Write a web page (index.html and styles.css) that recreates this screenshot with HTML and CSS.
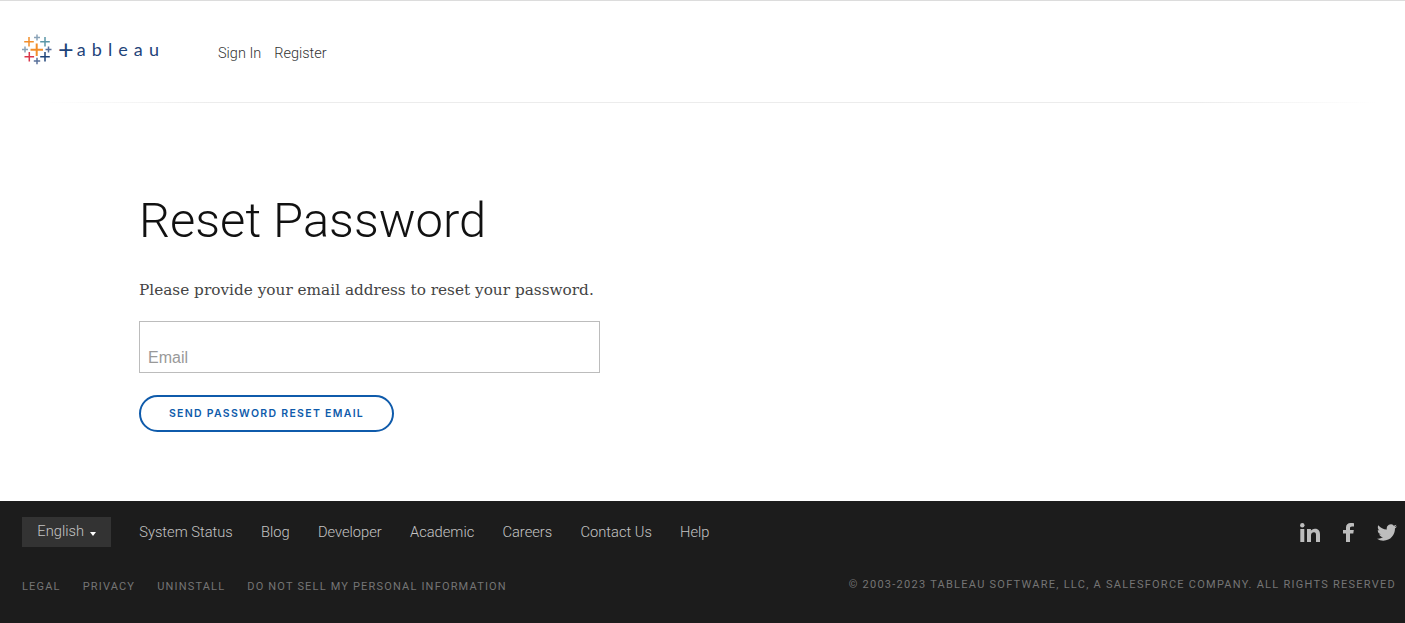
FILE: index.html
```html
<!DOCTYPE html>
<html lang="en">
<head>
  <title>Reset Password</title>
  <meta charset="UTF-8">
  <link rel="stylesheet" href="styles.css">
</head>
<body>
  <header class="site-header">
    <a class="logo" href="#">
      <svg class="logo-mark" width="30" height="30" viewBox="0 0 30 30" fill="none" stroke-width="1.5">
        <path stroke="#8aa3b8" d="M15 -0.5v6M12 2.5h6"/>
        <path stroke="#f28e2b" d="M7 2v9.500M2.200 6.700h9.600"/>
        <path stroke="#5b97a8" d="M23 2v9.500M18.200 6.700h9.600"/>
        <path stroke="#f28e2b" stroke-width="2" d="M14.700 8.500v12.500M8.500 14.800h12.500"/>
        <path stroke="#8aa3b8" d="M3 11.500v6M0 14.500h6"/>
        <path stroke="#59709a" d="M26.500 11.500v6M23.500 14.500h6"/>
        <path stroke="#d9374b" d="M7.300 17v9.500M2.500 21.700h9.600"/>
        <path stroke="#1f447a" d="M23 17v9.500M18.200 21.700h9.600"/>
        <path stroke="#59709a" d="M15 22.800v6.400M11.800 26h6.400"/>
      </svg>
      <span class="logo-word"><span class="logo-plus">+</span>ableau</span>
    </a>
    <nav class="header-nav">
      <a href="#">Sign In</a>
      <a href="#">Register</a>
    </nav>
  </header>

  <main class="content">
    <h1>Reset Password</h1>
    <p class="intro">Please provide your email address to reset your password.</p>
    <form class="reset-form">
      <input class="email-input" type="email" placeholder="Email">
      <button class="send-button" type="button">Send password reset email</button>
    </form>
  </main>

  <footer class="site-footer">
    <div class="footer-row">
      <div class="footer-links">
        <button class="lang-button" type="button">English <span class="caret"></span></button>
        <a href="#">System Status</a>
        <a href="#">Blog</a>
        <a href="#">Developer</a>
        <a href="#">Academic</a>
        <a href="#">Careers</a>
        <a href="#">Contact Us</a>
        <a href="#">Help</a>
      </div>
      <div class="social">
        <a href="#" aria-label="LinkedIn">
          <svg width="20" height="19" viewBox="0 0 20 19" fill="#bdbdbd"><circle cx="2.300" cy="2.200" r="2.200"/><rect x="0.300" y="6" width="4" height="13"/><path d="M7 6h3.900v1.800c.6-1.100 2-2.100 4-2.100 3.900 0 5.100 2.500 5.100 5.800V19h-4v-6.700c0-1.700-.4-3-2-3s-3 1.300-3 3V19H7z"/></svg>
        </a>
        <a href="#" aria-label="Facebook">
          <svg width="11" height="19" viewBox="0 0 11 19" fill="#bdbdbd"><path d="M3 19V10.500H0V7h3V4.600C3 1.500 4.900 0 7.600 0 8.900 0 10 .1 11 .2v3.200H9c-1.500 0-2 .7-2 1.900V7h3.800l-.5 3.500H7V19z"/></svg>
        </a>
        <a href="#" aria-label="Twitter">
          <svg width="20" height="17" viewBox="0 2 24 20" fill="#bdbdbd"><path d="M23.953 4.570a10 10 0 01-2.825.775 4.958 4.958 0 002.163-2.723c-.951.555-2.005.959-3.127 1.184a4.920 4.920 0 00-8.384 4.482C7.690 8.095 4.067 6.130 1.640 3.162a4.822 4.822 0 00-.666 2.475c0 1.710.870 3.213 2.188 4.096a4.904 4.904 0 01-2.228-.616v.060a4.923 4.923 0 003.946 4.827 4.996 4.996 0 01-2.212.085 4.936 4.936 0 004.604 3.417 9.867 9.867 0 01-6.102 2.105c-.390 0-.779-.023-1.170-.067a13.995 13.995 0 007.557 2.209c9.053 0 13.998-7.496 13.998-13.985 0-.210 0-.420-.015-.630A9.935 9.935 0 0024 4.590z"/></svg>
        </a>
      </div>
    </div>
    <div class="footer-row footer-legal">
      <div class="legal-links">
        <a href="#">Legal</a>
        <a href="#">Privacy</a>
        <a href="#">Uninstall</a>
        <a href="#">Do not sell my personal information</a>
      </div>
      <div class="copyright">© 2003-2023 Tableau Software, LLC, a Salesforce Company. All Rights Reserved</div>
    </div>
  </footer>
</body>
</html>
```

FILE: styles.css
```css
* {
  box-sizing: border-box;
}
body {
  margin: 0;
  min-height: 623px;
  display: flex;
  flex-direction: column;
  font-family: 'Roboto', sans-serif;
  font-weight: 300;
  background-color: #fff;
  border-top: 1px solid #dcdcdc;
}
a {
  color: inherit;
  text-decoration: none;
}
.site-header {
  height: 102px;
  padding: 34px 0 0 22px;
  display: flex;
  align-items: flex-start;
  background: linear-gradient(to right, transparent 3%, #ececec 15%, #ececec 85%, transparent 98%) bottom / 100% 1px no-repeat;
}
.logo {
  width: 196px;
  display: flex;
  align-items: center;
  gap: 6px;
}
.logo-mark {
  overflow: visible;
}
.logo-word {
  display: flex;
  align-items: center;
  margin-bottom: 2px;
  font-family: 'Lato', sans-serif;
  font-weight: 400;
  font-size: 18px;
  line-height: 20px;
  letter-spacing: 6.100px;
  color: #1f447a;
}
.logo-plus {
  font-size: 27px;
  letter-spacing: 3px;
}
.header-nav {
  display: flex;
  gap: 13px;
  padding-top: 10px;
  font-size: 14.500px;
  color: #333;
}
.content {
  flex: 1;
  padding: 87px 0 0 139px;
}
h1 {
  margin: 0;
  font-size: 48.900px;
  line-height: 62px;
  font-weight: 300;
  color: #111;
}
.intro {
  margin: 25px 0 0;
  font-family: 'DejaVu Serif', serif;
  font-weight: 400;
  font-size: 15.300px;
  line-height: 26px;
  color: #444;
}
.reset-form {
  margin-top: 18px;
  display: flex;
  flex-direction: column;
  align-items: flex-start;
  gap: 22px;
}
.email-input {
  width: 461px;
  height: 52px;
  padding: 22px 8px 0;
  border: 1px solid #bcbcbc;
  font-family: 'Liberation Sans', sans-serif;
  font-size: 16px;
}
.email-input::placeholder {
  color: #999;
}
.send-button {
  width: 255px;
  height: 37px;
  border: 2px solid #0f5bab;
  border-radius: 19px;
  background: #fff;
  color: #0f5bab;
  font-family: 'Inter', sans-serif;
  font-size: 10.500px;
  font-weight: 600;
  letter-spacing: 1.300px;
  text-transform: uppercase;
}
.site-footer {
  height: 122px;
  padding: 16px 9px 0 22px;
  background-color: #1c1c1c;
  color: #c4c4c4;
}
.footer-row {
  display: flex;
  justify-content: space-between;
  align-items: center;
}
.footer-links {
  display: flex;
  align-items: center;
  gap: 28.200px;
  font-size: 14.700px;
}
.lang-button {
  width: 89px;
  height: 30px;
  padding: 0 0 2px;
  border: none;
  background-color: #333;
  color: #c4c4c4;
  font-family: inherit;
  font-weight: 300;
  font-size: 14.700px;
}
.caret {
  display: inline-block;
  margin-left: 2px;
  border-left: 3px solid transparent;
  border-right: 3px solid transparent;
  border-top: 4px solid #fff;
}
.social {
  display: flex;
  align-items: center;
  gap: 23px;
  margin-right: -1px;
}
.social a {
  display: flex;
}
.footer-legal {
  margin-top: 33px;
  font-size: 11px;
  font-weight: 400;
  letter-spacing: 1.180px;
  text-transform: uppercase;
  color: #757575;
}
.legal-links {
  display: flex;
  gap: 22px;
}
.copyright {
  margin-top: -4px;
  letter-spacing: 1.260px;
}
```
